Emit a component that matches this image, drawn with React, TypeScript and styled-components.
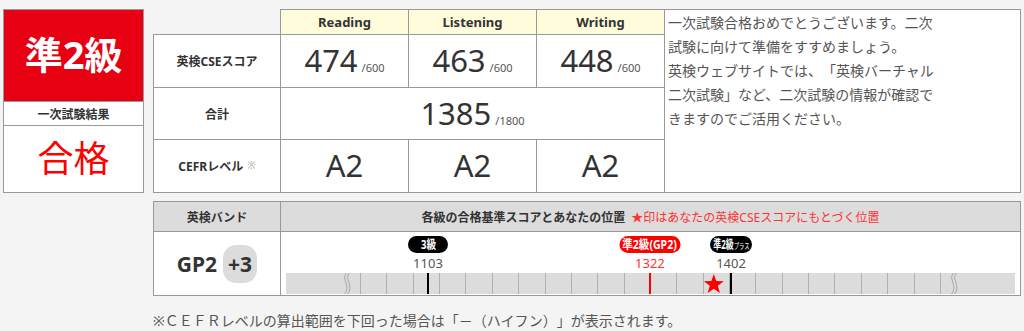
import React from 'react';
import styled, { createGlobalStyle } from 'styled-components';

const GlobalStyle = createGlobalStyle`
  body {
    margin: 0;
    background: #f4f4f4;
    font-family: "Noto Sans", "Noto Sans CJK JP", sans-serif;
    color: #333;
    text-spacing-trim: space-all;
  }
`;

const LINE = '#999';

const Page = styled.div`
  padding: 9px 0 0 3px;
  width: 1021px;
`;

const TopRow = styled.div`
  display: flex;
  align-items: flex-start;
`;

const ResultCard = styled.div`
  width: 141px;
  box-sizing: border-box;
  border: 1px solid ${LINE};
  background: #fff;
  display: flex;
  flex-direction: column;
`;

const GradeBanner = styled.div`
  height: 91px;
  background: #e60012;
  color: #fff;
  font-size: 38px;
  font-weight: 700;
  display: flex;
  align-items: center;
  justify-content: center;
  padding-bottom: 6px;
  box-sizing: border-box;
`;

const ResultLabel = styled.div`
  height: 25px;
  box-sizing: border-box;
  border-top: 1px solid ${LINE};
  border-bottom: 1px solid ${LINE};
  font-size: 12px;
  font-weight: 700;
  display: flex;
  align-items: center;
  justify-content: center;
`;

const ResultValue = styled.div`
  height: 66px;
  color: #ff0000;
  font-size: 36px;
  display: flex;
  align-items: center;
  justify-content: center;
  padding-bottom: 6px;
  box-sizing: border-box;
`;

const ScoreTable = styled.table`
  margin-left: 9px;
  border-collapse: collapse;
  table-layout: fixed;
  width: 512px;
`;

const HeadCell = styled.th<{ $empty?: boolean }>`
  height: 24px;
  padding: 0;
  font-size: 13px;
  font-weight: 700;
  background: ${(p) => (p.$empty ? 'transparent' : '#fffcdb')};
  border: ${(p) => (p.$empty ? 'none' : `1px solid ${LINE}`)};
`;

const RowLabel = styled.th<{ $h: number }>`
  height: ${(p) => p.$h}px;
  padding: 0;
  font-size: 12px;
  font-weight: 700;
  background: #fff;
  border: 1px solid ${LINE};
`;

const Note = styled.span`
  color: #aaa;
  font-size: 10px;
  font-weight: 400;
  margin-left: 4px;
  vertical-align: 2px;
`;

const ValueCell = styled.td`
  padding: 0;
  background: #fff;
  border: 1px solid ${LINE};
  text-align: center;
  white-space: nowrap;
`;

const Big = styled.span`
  font-size: 31px;
  color: #333;
  line-height: 1;
`;

const Max = styled.span`
  font-size: 11px;
  color: #555;
  margin-left: 4px;
`;

const Message = styled.div`
  margin-left: -1px;
  width: 357px;
  height: 184px;
  box-sizing: border-box;
  border: 1px solid ${LINE};
  background: #fff;
  padding: 1px 3px;
  font-size: 14px;
  line-height: 24px;
  color: #555;

  p {
    margin: 0;
    width: 268px;
  }
`;

const BandTable = styled.table`
  margin: 8px 0 0 150px;
  border-collapse: collapse;
  table-layout: fixed;
  width: 868px;
`;

const BandHead = styled.th`
  height: 29px;
  padding: 0;
  background: #dcdcdc;
  border: 1px solid ${LINE};
  font-size: 12px;
  font-weight: 700;
  color: #333;
`;

const RedNote = styled.span`
  color: #ff3333;
  font-weight: 400;
  margin-left: 6px;
`;

const BandCell = styled.td`
  height: 63px;
  padding: 0;
  background: #fff;
  border: 1px solid ${LINE};
  text-align: center;
  vertical-align: middle;
`;

const Band = styled.div`
  display: inline-flex;
  align-items: center;
  gap: 6px;
  font-size: 21px;
  font-weight: 700;
  color: #333;
`;

const Plus = styled.span`
  background: #dcdcdc;
  border-radius: 13px;
  padding: 8px 5px;
  line-height: 22px;
`;

const ScaleCell = styled.td`
  padding: 0 4px 1px 5px;
  background: #fff;
  border: 1px solid ${LINE};
  vertical-align: bottom;
`;

const Scale = styled.div`
  position: relative;
  height: 62px;
  display: flex;
  flex-direction: column;
  justify-content: flex-end;
`;

const Marker = styled.div`
  position: absolute;
  top: 4px;
  transform: translateX(-50%);
  display: flex;
  flex-direction: column;
  align-items: center;
`;

const Badge = styled.span<{ $red?: boolean; $w: number }>`
  width: ${(p) => p.$w}px;
  height: 17px;
  border-radius: 9px;
  background: ${(p) => (p.$red ? '#ff0000' : '#000')};
  display: flex;
  justify-content: center;
  align-items: center;
`;

const BadgeText = styled.span<{ $squeeze: number }>`
  display: inline-block;
  flex: none;
  color: #fff;
  font-size: 12px;
  font-weight: 700;
  line-height: 17px;
  white-space: nowrap;
  transform: scaleX(${(p) => p.$squeeze});
`;

const Small = styled.span`
  font-size: 8px;
  font-weight: 400;
`;

const ScoreNum = styled.span<{ $red?: boolean }>`
  margin-top: 2px;
  font-size: 13px;
  line-height: 16px;
  color: ${(p) => (p.$red ? '#ff3333' : '#555')};
`;

const Footnote = styled.div`
  margin: 13px 0 0 150px;
  font-size: 14px;
  line-height: 24px;
  color: #555;
`;

const BAR_W = 729;
const BAR_H = 21;
const base = 962.9;
const pxPerPt = 1.0135;
const pos = (score: number) => (score - base) * pxPerPt;

const ticks = Array.from({ length: 23 }, (_, i) => Math.round(74 + 26.36 * i) + 0.5);

const grades = [
  { score: 1103, label: <>3級</>, red: false, w: 40, squeeze: 0.8 },
  { score: 1322, label: <>準2級(GP2)</>, red: true, w: 61, squeeze: 0.88 },
  { score: 1402, label: <>準2級<Small>プラス</Small></>, red: false, w: 42, squeeze: 0.66 },
];

const myScore = 1385;

function Wave({ x }: { x: number }) {
  const s = (dx: number) =>
    `M${x + dx + 1} 0 C${x + dx - 5} 6, ${x + dx + 6} 13, ${x + dx - 1} 21`;
  return (
    <g fill="none" stroke="#a0a0a0" strokeWidth={0.9}>
      <path d={s(-1.5)} />
      <path d={s(1.5)} />
    </g>
  );
}

function Star({ cx, cy, r }: { cx: number; cy: number; r: number }) {
  const pts = Array.from({ length: 10 }, (_, i) => {
    const rad = i % 2 === 0 ? r : r * 0.4;
    const a = -Math.PI / 2 + (i * Math.PI) / 5;
    return `${(cx + rad * Math.cos(a)).toFixed(2)},${(cy + rad * Math.sin(a)).toFixed(2)}`;
  }).join(' ');
  return <polygon points={pts} fill="#ff0000" />;
}

function ScaleBar() {
  return (
    <svg width={BAR_W} height={BAR_H} style={{ display: 'block' }}>
      <rect width={BAR_W} height={BAR_H} fill="#dcdcdc" />
      {ticks.map((x) => (
        <line key={x} x1={x} x2={x} y1={0} y2={BAR_H} stroke="#b0b0b0" strokeWidth={1} />
      ))}
      <Wave x={61} />
      <Wave x={668} />
      {grades.map((g) => (
        <line
          key={g.score}
          x1={Math.round(pos(g.score))}
          x2={Math.round(pos(g.score))}
          y1={0}
          y2={BAR_H}
          stroke={g.red ? '#ff0000' : '#000'}
          strokeWidth={2}
        />
      ))}
      <Star cx={pos(myScore)} cy={11.5} r={10.5} />
    </svg>
  );
}

const scores = [474, 463, 448];

export default function App() {
  return (
    <>
      <GlobalStyle />
      <Page>
        <TopRow>
          <ResultCard>
            <GradeBanner>準2級</GradeBanner>
            <ResultLabel>一次試験結果</ResultLabel>
            <ResultValue>合格</ResultValue>
          </ResultCard>

          <ScoreTable>
            <colgroup>
              <col style={{ width: 127 }} />
              <col style={{ width: 128 }} />
              <col style={{ width: 128 }} />
              <col style={{ width: 128 }} />
            </colgroup>
            <thead>
              <tr>
                <HeadCell $empty />
                <HeadCell>Reading</HeadCell>
                <HeadCell>Listening</HeadCell>
                <HeadCell>Writing</HeadCell>
              </tr>
            </thead>
            <tbody>
              <tr>
                <RowLabel $h={52}>英検CSEスコア</RowLabel>
                {scores.map((s) => (
                  <ValueCell key={s}>
                    <Big>{s}</Big>
                    <Max>/600</Max>
                  </ValueCell>
                ))}
              </tr>
              <tr>
                <RowLabel $h={51}>合計</RowLabel>
                <ValueCell colSpan={3}>
                  <Big>1385</Big>
                  <Max>/1800</Max>
                </ValueCell>
              </tr>
              <tr>
                <RowLabel $h={52}>
                  CEFRレベル<Note>※</Note>
                </RowLabel>
                {['r', 'l', 'w'].map((k) => (
                  <ValueCell key={k}>
                    <Big>A2</Big>
                  </ValueCell>
                ))}
              </tr>
            </tbody>
          </ScoreTable>

          <Message>
            <p>一次試験合格おめでとうございます。二次試験に向けて準備をすすめましょう。</p>
            <p>英検ウェブサイトでは、「英検バーチャル二次試験」など、二次試験の情報が確認できますのでご活用ください。</p>
          </Message>
        </TopRow>

        <BandTable>
          <colgroup>
            <col style={{ width: 127 }} />
            <col />
          </colgroup>
          <thead>
            <tr>
              <BandHead>英検バンド</BandHead>
              <BandHead>
                各級の合格基準スコアとあなたの位置
                <RedNote>★印はあなたの英検CSEスコアにもとづく位置</RedNote>
              </BandHead>
            </tr>
          </thead>
          <tbody>
            <tr>
              <BandCell>
                <Band>
                  GP2<Plus>+3</Plus>
                </Band>
              </BandCell>
              <ScaleCell>
                <Scale>
                  {grades.map((g) => (
                    <Marker key={g.score} style={{ left: pos(g.score) }}>
                      <Badge $red={g.red} $w={g.w}>
                        <BadgeText $squeeze={g.squeeze}>{g.label}</BadgeText>
                      </Badge>
                      <ScoreNum $red={g.red}>{g.score}</ScoreNum>
                    </Marker>
                  ))}
                  <ScaleBar />
                </Scale>
              </ScaleCell>
            </tr>
          </tbody>
        </BandTable>

        <Footnote>※ＣＥＦＲレベルの算出範囲を下回った場合は「－（ハイフン）」が表示されます。</Footnote>
      </Page>
    </>
  );
}
